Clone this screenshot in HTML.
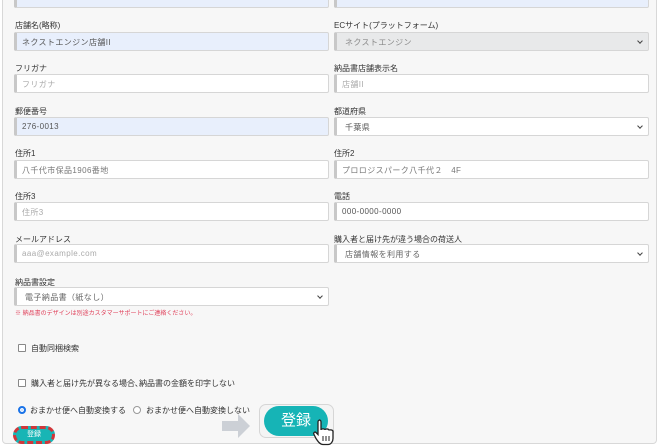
<!DOCTYPE html>
<html><head><meta charset="utf-8"><style>
*{box-sizing:border-box;margin:0;padding:0}
body{width:660px;height:446px;overflow:hidden;background:#fff;font-family:"Liberation Sans","Noto Sans CJK JP",sans-serif;position:relative}
.card{position:absolute;left:2px;top:-4px;width:655px;height:448px;background:#f7f7f7;border:1px solid #d8d8d8;border-radius:4px}
.l{position:absolute;font-size:8px;color:#333}
.i{position:absolute;height:19px;width:315px;background:#fff;border:1px solid #d6d6d6;border-left:3px solid #c8c8c8;border-radius:2px;font-size:8px;color:#555;padding:4px 0 0 5px;letter-spacing:.4px}
.b{background:#e8effc}
.g{background:#e8e9ea;color:#888}
.ph{color:#aaa}
.s::after{content:"";position:absolute;right:6px;top:6px;width:3px;height:3px;border-right:1.2px solid #444;border-bottom:1.2px solid #444;transform:rotate(45deg)}
.cb{position:absolute;width:8px;height:8px;border:1px solid #888;border-radius:1px;background:#fff}
</style></head><body>
<div class="card"></div>
<div class="i b" style="left:14px;top:-11px"></div>
<div class="i b" style="left:334px;top:-11px"></div>

<div class="l" style="left:15px;top:20px">店舗名(略称)</div>
<div class="i b" style="left:14px;top:32px">ネクストエンジン店舗II</div>
<div class="l" style="left:334px;top:20px">ECサイト(プラットフォーム)</div>
<div class="i g s" style="left:334px;top:32px;padding-left:8px">ネクストエンジン</div>

<div class="l" style="left:15px;top:63px">フリガナ</div>
<div class="i ph" style="left:14px;top:74px">フリガナ</div>
<div class="l" style="left:334px;top:63px">納品書店舗表示名</div>
<div class="i ph" style="left:334px;top:74px">店舗II</div>

<div class="l" style="left:15px;top:106px">郵便番号</div>
<div class="i b" style="left:14px;top:117px">276-0013</div>
<div class="l" style="left:334px;top:106px">都道府県</div>
<div class="i s" style="left:334px;top:117px;padding-left:8px">千葉県</div>

<div class="l" style="left:15px;top:148px">住所1</div>
<div class="i" style="left:14px;top:160px;color:#777">八千代市保品1906番地</div>
<div class="l" style="left:334px;top:148px">住所2</div>
<div class="i" style="left:334px;top:160px;color:#777">プロロジスパーク八千代２　4F</div>

<div class="l" style="left:15px;top:191px">住所3</div>
<div class="i ph" style="left:14px;top:202px">住所3</div>
<div class="l" style="left:334px;top:191px">電話</div>
<div class="i" style="left:334px;top:202px">000-0000-0000</div>

<div class="l" style="left:15px;top:234px">メールアドレス</div>
<div class="i ph" style="left:14px;top:244px">aaa@example.com</div>
<div class="l" style="left:334px;top:234px">購入者と届け先が違う場合の荷送人</div>
<div class="i s" style="left:334px;top:244px;padding-left:8px;color:#666">店舗情報を利用する</div>

<div class="l" style="left:15px;top:277px">納品書設定</div>
<div class="i s" style="left:14px;top:287px;padding-left:8px;color:#666">電子納品書（紙なし）</div>
<div class="l" style="left:15px;top:308px;font-size:6px;color:#e0405a">※ 納品書のデザインは別途カスタマーサポートにご連絡ください。</div>

<div class="cb" style="left:18px;top:344px"></div>
<div class="l" style="left:31px;top:343px">自動同梱検索</div>
<div class="cb" style="left:18px;top:379px"></div>
<div class="l" style="left:31px;top:378px">購入者と届け先が異なる場合､納品書の金額を印字しない</div>

<div style="position:absolute;left:18px;top:406px;width:8px;height:8px;border-radius:50%;background:#1a73e8;border:2px solid #1a73e8;box-shadow:inset 0 0 0 1.5px #fff"></div>
<div class="l" style="left:30px;top:405px">おまかせ便へ自動変換する</div>
<div style="position:absolute;left:133px;top:406px;width:8px;height:8px;border-radius:50%;border:1px solid #999;background:#fff"></div>
<div class="l" style="left:146px;top:405px">おまかせ便へ自動変換しない</div>

<div style="position:absolute;left:13px;top:426px;width:42px;height:18px;border:3px dashed #d0363a;border-radius:10px;background:#18b5b5"></div>
<div style="position:absolute;left:16px;top:429px;width:36px;height:12px;color:#fff;font-size:7px;text-align:center;line-height:12px">登録</div>

<svg style="position:absolute;left:222px;top:413px" width="30" height="26"><path d="M0 8H16V1L28 13L16 25V18H0Z" fill="#ccd0d6"/></svg>
<div style="position:absolute;left:259px;top:404px;width:75px;height:34px;border:1px solid #d6d6d6;border-radius:7px;background:#f4f4f4"></div>
<div style="position:absolute;left:264px;top:406px;width:64px;height:30px;border-radius:15px;background:#16b4b6;color:#fff;font-size:15px;text-align:center;line-height:30px">登録</div>
<svg style="position:absolute;left:313px;top:418px" width="24" height="28" viewBox="0 0 24 28"><path d="M6 2c1.5 0 2 1 2 2v8c0-1.5 4-1.5 4 0 0-1.5 4-1.5 4 0.5 0-1 4-1 4 1v7c0 3-2 6-5 6h-5c-3 0-5-3-7-6l-2-4c-1-2 1-3 2-2l2 2V4c0-1 .5-2 2-2z" fill="#fff" stroke="#222" stroke-width="1.3"/><path d="M10 18v5M13 18v5M16 18v5" stroke="#222" stroke-width="1"/></svg>
</body></html>
